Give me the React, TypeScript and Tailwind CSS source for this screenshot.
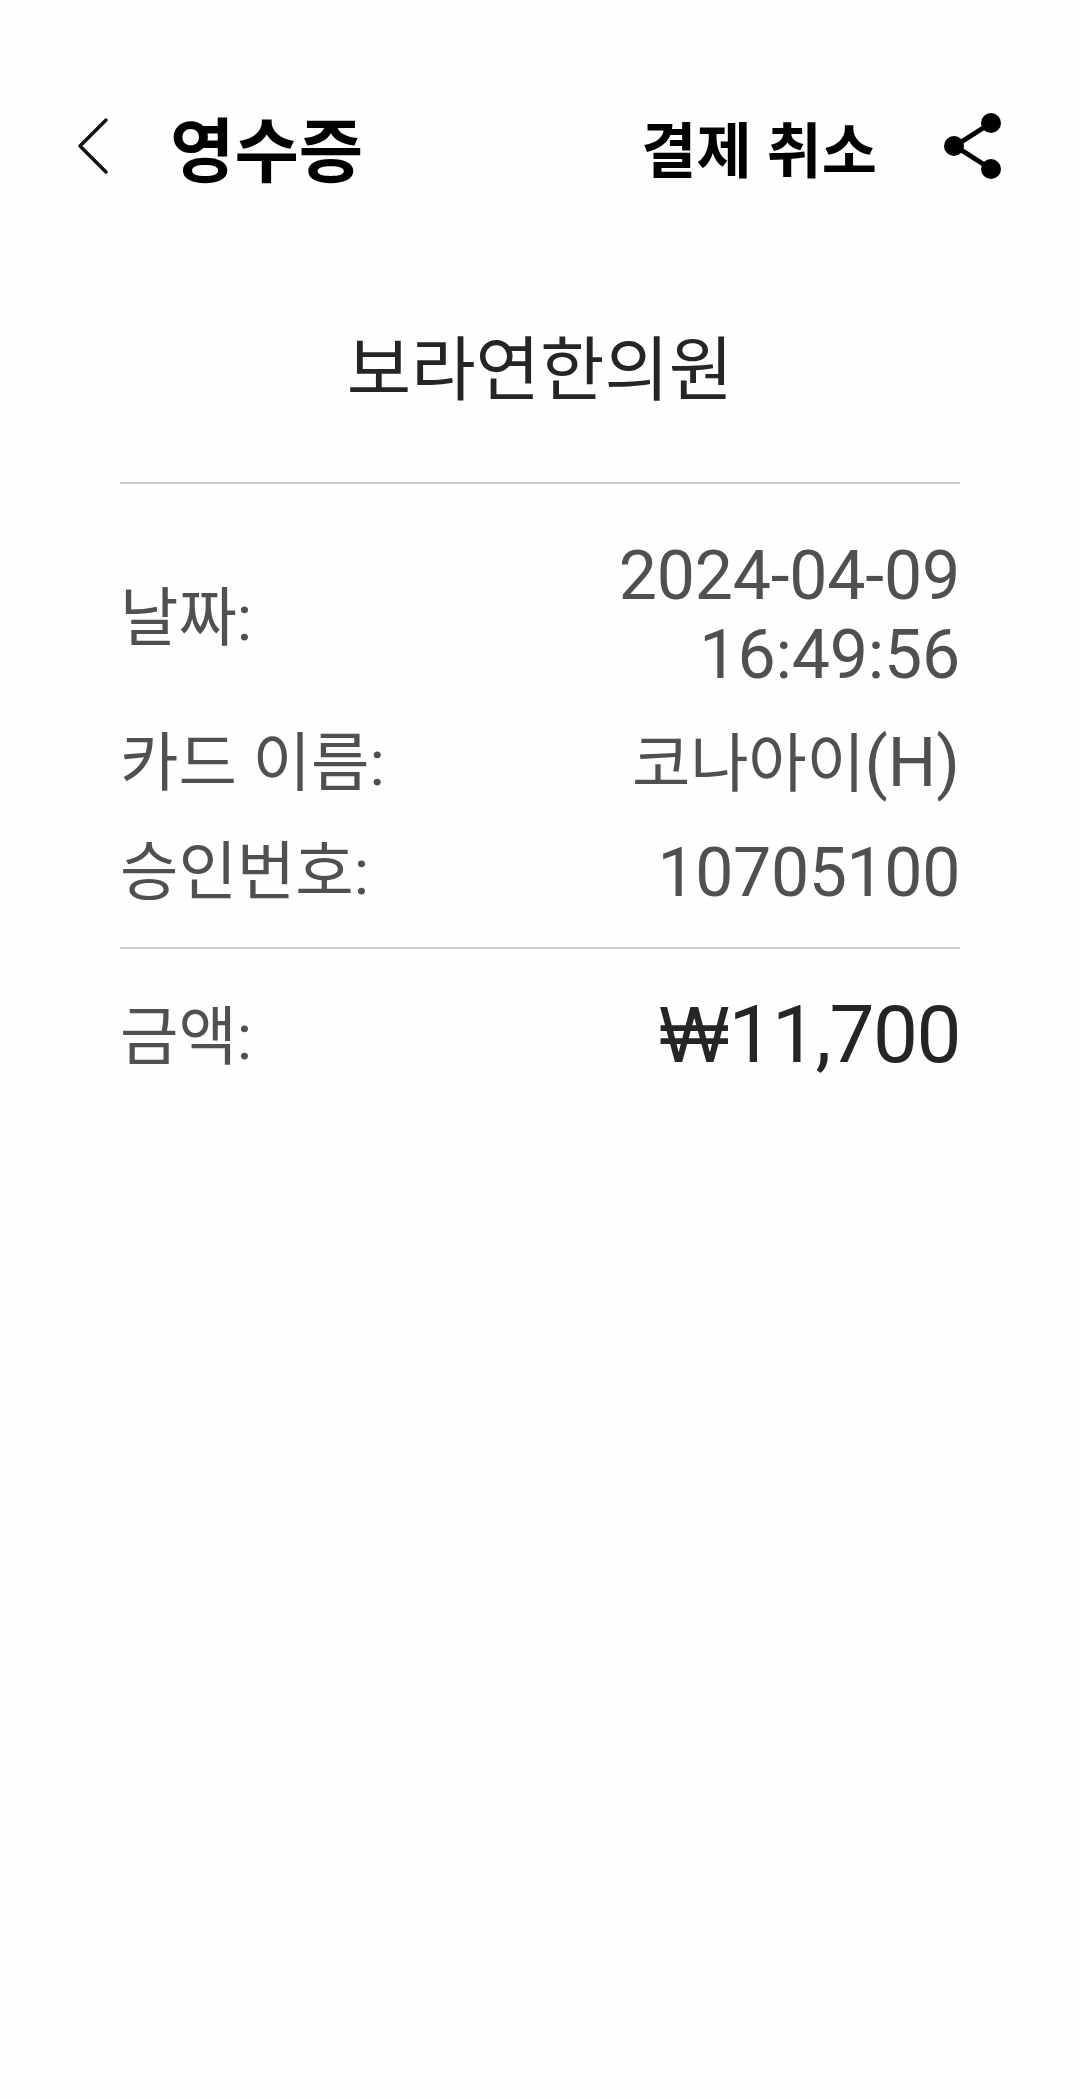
const cjk = "font-['Roboto','Noto_Sans_CJK_KR',sans-serif]";

function Row({ label, children, className = "", labelClass = "" }: { label: string; children: React.ReactNode; className?: string; labelClass?: string }) {
  return (
    <div className={`flex items-center justify-between ${className}`}>
      <span className={`text-[63.5px] leading-[76px] text-[#505052] ${labelClass}`}>{label}</span>
      {children}
    </div>
  );
}

export default function App() {
  return (
    <div className={`flex h-[2099px] w-[1080px] flex-col bg-[#fefefe] ${cjk}`}>
      <header className="mt-[108px] flex h-[76px] items-center pl-[76px] pr-[77px]">
        <svg width="34" height="60" viewBox="0 0 34 60" fill="none" className="mt-[2px] shrink-0">
          <path d="M30 3 L4 29 L30 55" stroke="#111" strokeWidth="3.5" strokeLinecap="round" strokeLinejoin="round" />
        </svg>
        <h1 className="ml-[60px] pt-[14px] text-[70px] font-bold leading-[76px] text-black">영수증</h1>
        <span className="ml-auto pt-[14px] text-[60px] font-bold leading-[76px] text-black">결제 취소</span>
        <svg width="60" height="68" viewBox="0 0 60 68" className="ml-[66px] shrink-0">
          <path d="M48 11 L12 34 L48 57" stroke="#000" strokeWidth="5" fill="none" />
          <circle cx="48" cy="11" r="10" fill="#000" />
          <circle cx="11" cy="34" r="10" fill="#000" />
          <circle cx="48" cy="57" r="10" fill="#000" />
        </svg>
      </header>
      <main className="mx-[120px] mt-[149px] flex flex-col">
        <h2 className="text-center text-[70px] leading-[76px] text-[#252527]">보라연한의원</h2>
        <div className="mt-[73px] h-[2px] bg-[#cccccc]" />
        <Row label="날짜:" className="mt-[53px]" labelClass="pt-[6px]">
          <span className="text-right text-[68px] leading-[79px] tracking-[-0.2px] text-[#505052]">
            2024-04-09
            <br />
            16:49:56
          </span>
        </Row>
        <Row label="카드 이름:" className="mt-[28px]">
          <span className="text-[68px] leading-[80px] text-[#505052]">
            <span className="text-[63.5px] tracking-[-0.3px]">코나아이</span>(H)
          </span>
        </Row>
        <Row label="승인번호:" className="mt-[28px]">
          <span className="text-[68px] leading-[80px] tracking-[-0.4px] text-[#505052]">10705100</span>
        </Row>
        <div className="mt-[34px] h-[2px] bg-[#cccccc]" />
        <Row label="금액:" className="mt-[44px]" labelClass="pt-[6px]">
          <span className="text-[80px] leading-[84px] tracking-[-1.5px] text-[#252527]">
            <span className="font-['Inter',sans-serif] text-[75px] font-normal">₩</span>11,700
          </span>
        </Row>
      </main>
    </div>
  );
}
